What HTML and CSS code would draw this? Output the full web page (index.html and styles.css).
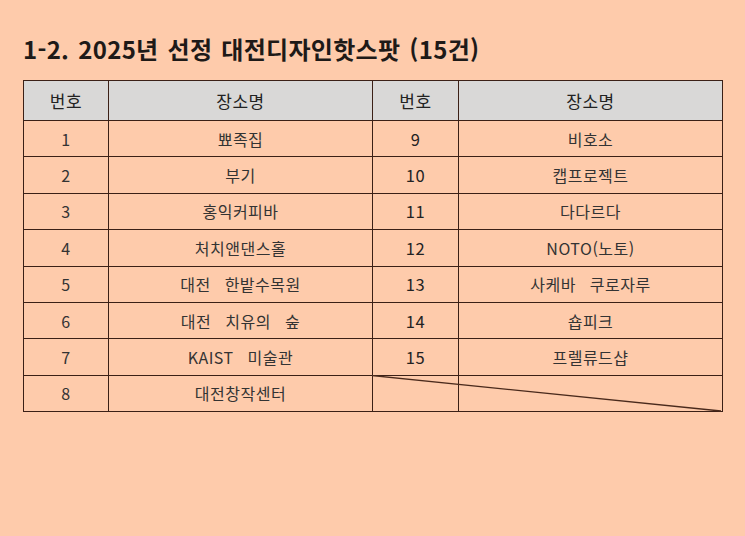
FILE: index.html
```html
<!DOCTYPE html>
<html lang="ko">
<head>
<meta charset="utf-8">
<link rel="stylesheet" href="styles.css">
</head>
<body>
<div class="page">
  <h1 class="title">1-2. 2025년 선정 대전디자인핫스팟 (15건)</h1>
  <div class="table-wrap">
    <table class="spots">
      <colgroup>
        <col class="c-no"><col class="c-name"><col class="c-no2"><col class="c-name2">
      </colgroup>
      <thead>
        <tr><th>번호</th><th>장소명</th><th>번호</th><th>장소명</th></tr>
      </thead>
      <tbody>
        <tr><td>1</td><td>뾰족집</td><td class="num">9</td><td>비호소</td></tr>
        <tr><td>2</td><td>부기</td><td class="num">10</td><td>캡프로젝트</td></tr>
        <tr><td>3</td><td>홍익커피바</td><td class="num">11</td><td>다다르다</td></tr>
        <tr><td>4</td><td>처치앤댄스홀</td><td class="num">12</td><td>NOTO(노토)</td></tr>
        <tr><td>5</td><td>대전 한밭수목원</td><td class="num">13</td><td>사케바 쿠로자루</td></tr>
        <tr><td>6</td><td>대전 치유의 숲</td><td class="num">14</td><td>숍피크</td></tr>
        <tr><td>7</td><td>KAIST 미술관</td><td class="num">15</td><td>프렐류드샵</td></tr>
        <tr><td>8</td><td>대전창작센터</td><td></td><td></td></tr>
      </tbody>
    </table>
    <svg class="diag" width="350" height="37" viewBox="0 0 350 37" aria-hidden="true">
      <line x1="0" y1="0.5" x2="349" y2="36" stroke="#4a2a1c" stroke-width="1.3"/>
    </svg>
  </div>
</div>
</body>
</html>
```
FILE: styles.css
```css
html, body {
  margin: 0;
  padding: 0;
  background: #fecbab;
}
body {
  width: 745px;
  height: 536px;
  overflow: hidden;
  font-family: "Noto Sans CJK KR", "Noto Sans", sans-serif;
  color: #2b2724;
}
.page {
  padding: 33px 0 0 23px;
}
.title {
  margin: 0;
  font-size: 24px;
  line-height: 31px;
  font-weight: 700;
  color: #1e1a18;
  word-spacing: 2px;
  letter-spacing: 0.3px;
}
.table-wrap {
  position: relative;
  margin-top: 16px;
  width: 699px;
}
.spots {
  border-collapse: collapse;
  table-layout: fixed;
  width: 699px;
}
.c-no { width: 85px; }
.c-name { width: 264px; }
.c-no2 { width: 86px; }
.c-name2 { width: 264px; }
.spots th,
.spots td {
  border: 1px solid #3b2016;
  text-align: center;
  padding: 0;
  font-size: 16px;
  font-weight: 400;
  color: #333;
  letter-spacing: 0.5px;
  word-spacing: 9px;
}
.spots th {
  background: #d9d8d7;
  height: 39px;
  font-size: 17px;
  color: #222;
}
.spots td {
  height: 35.4px;
}
.spots td.num {
  color: #222;
  font-size: 16.5px;
}
.diag {
  position: absolute;
  left: 349px;
  top: 295px;
  pointer-events: none;
}
```
